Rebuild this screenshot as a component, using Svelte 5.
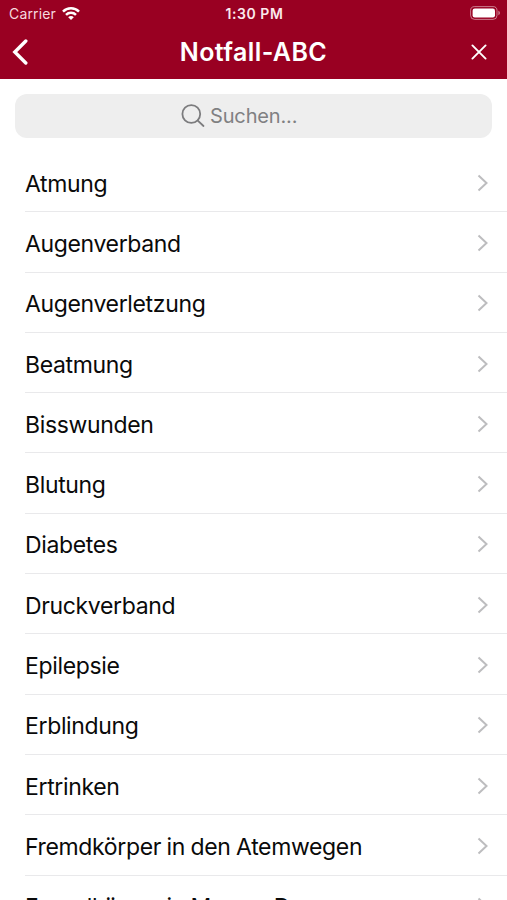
<script lang="ts">
    const topics = [
        'Atmung',
        'Augenverband',
        'Augenverletzung',
        'Beatmung',
        'Bisswunden',
        'Blutung',
        'Diabetes',
        'Druckverband',
        'Epilepsie',
        'Erblindung',
        'Ertrinken',
        'Fremdkörper in den Atemwegen',
        'Fremdkörper in Magen-Darm'
    ];

    let query = $state('');

    const filtered = $derived(
        topics.filter((topic) => topic.toLowerCase().includes(query.toLowerCase()))
    );
</script>

<div class="screen">
    <header>
        <div class="status-bar">
            <div class="carrier">
                <span>Carrier</span>
                <svg width="18" height="14" viewBox="0 0 18 14" fill="none" stroke="#fff" stroke-width="2.5">
                    <path d="M1 4.6C5.4 .2 12.6 .2 17 4.6" />
                    <path d="M4 7.8c2.8-2.8 7.2-2.8 10 0" />
                    <path d="M9 13 6.2 10.2c1.6-1.5 4-1.5 5.6 0z" fill="#fff" stroke="none" />
                </svg>
            </div>
            <span class="time">1:30 PM</span>
            <svg class="battery" width="31" height="14" viewBox="0 0 31 14">
                <rect x=".6" y=".6" width="26.4" height="12.8" rx="4" fill="none" stroke="#fff" stroke-opacity=".48" />
                <rect x="2.6" y="2.6" width="22.4" height="8.8" rx="2.2" fill="#fff" />
                <path d="M28.4 4.8c2 .7 2 3.7 0 4.4z" fill="#fff" fill-opacity=".5" />
            </svg>
        </div>
        <div class="nav-bar">
            <button aria-label="Zurück">
                <svg width="16" height="26" viewBox="0 0 16 26" fill="none" stroke="#fff" stroke-width="3.4" stroke-linecap="round" stroke-linejoin="miter">
                    <path d="M13.8 2 2.8 13l11 11" />
                </svg>
            </button>
            <h1>Notfall-ABC</h1>
            <button aria-label="Schließen">
                <svg width="16" height="16" viewBox="0 0 16 16" fill="none" stroke="#fff" stroke-width="1.9" stroke-linecap="round">
                    <path d="m1.4 1.4 13.2 13.2M14.6 1.4 1.4 14.6" />
                </svg>
            </button>
        </div>
    </header>

    <label class="search">
        <svg width="24" height="24" viewBox="0 0 24 24" fill="none" stroke="#7c7c7e" stroke-width="1.8" stroke-linecap="round">
            <circle cx="10.3" cy="10" r="8.9" />
            <path d="m16.8 16.6 5.7 5.4" />
        </svg>
        <input type="text" placeholder="Suchen..." bind:value={query} />
    </label>

    <ul>
        {#each filtered as topic}
            <li>
                <span>{topic}</span>
                <svg width="12" height="18" viewBox="0 0 12 18" fill="none" stroke="#bdbdbf" stroke-width="2">
                    <path d="m1.5 1.5 8 7.5-8 7.5" />
                </svg>
            </li>
        {/each}
    </ul>
</div>

<style>
    :global(body) {
        background: #fff;
    }

    .screen {
        height: 900px;
        overflow: hidden;
        background: #fff;
        color: #0a0a0a;
        font-family: Inter, 'Liberation Sans', sans-serif;
    }

    header {
        height: 79px;
        background: #990022;
        color: #fff;
    }

    .status-bar {
        display: grid;
        grid-template-columns: 1fr auto 1fr;
        align-items: center;
        height: 27px;
        padding: 0 6px 0 8px;
        font-size: 14px;
    }

    .carrier {
        display: flex;
        align-items: center;
        gap: 6px;
        padding-left: 1px;
        color: #f6d9df;
        letter-spacing: 0.15px;
    }

    .time {
        font-size: 14px;
        font-weight: 600;
        letter-spacing: 0.55px;
        color: #fbe9ed;
    }

    .battery {
        justify-self: end;
        margin-top: -1px;
    }

    .nav-bar {
        display: flex;
        align-items: center;
        justify-content: space-between;
        height: 50px;
        padding: 0 20px 0 12px;
    }

    button {
        display: flex;
        padding: 0;
        background: none;
        border: none;
        cursor: pointer;
    }

    h1 {
        margin: 0 0 0 8px;
        font-size: 25px;
        font-weight: 600;
        letter-spacing: 0.4px;
    }

    .search {
        display: flex;
        align-items: center;
        justify-content: center;
        gap: 5px;
        height: 44px;
        margin: 15px 15px 14px;
        background: #eeeeee;
        border-radius: 12px;
    }

    .search input {
        width: 116px;
        padding: 0;
        background: none;
        border: none;
        outline: none;
        color: #111;
        font: inherit;
        font-size: 20px;
        letter-spacing: -0.15px;
    }

    .search input::placeholder {
        color: #808082;
        opacity: 1;
    }

    ul {
        margin: 0;
        padding: 0 0 0 25px;
        list-style: none;
    }

    li {
        display: flex;
        align-items: center;
        justify-content: space-between;
        box-sizing: border-box;
        height: 60.3px;
        padding: 4px 18px 0 0;
        border-bottom: 1px solid #e9e9eb;
        font-size: 23px;
        letter-spacing: -0.35px;
        word-spacing: -0.6px;
        white-space: nowrap;
    }

    li svg {
        margin-bottom: 2px;
    }
</style>
